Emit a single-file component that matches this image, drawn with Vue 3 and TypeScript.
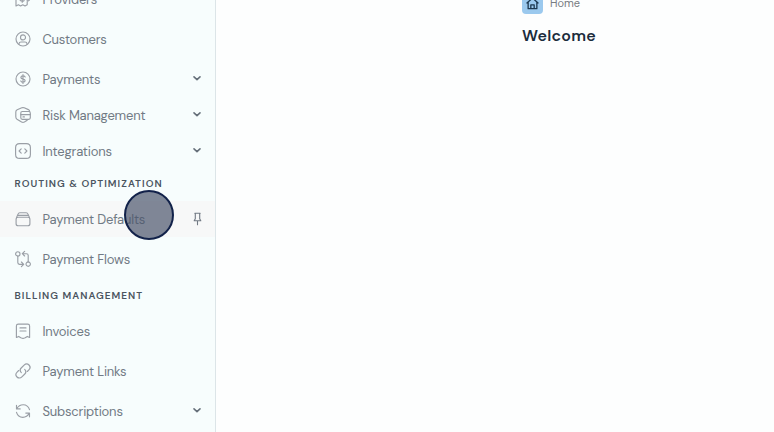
<script setup lang="ts">
interface Entry {
  kind: 'leaf' | 'group' | 'heading'
  label: string
  icon?: string
  active?: boolean
}

const entries: Entry[] = [
  { kind: 'leaf', label: 'Providers', icon: 'providers' },
  { kind: 'leaf', label: 'Customers', icon: 'customers' },
  { kind: 'group', label: 'Payments', icon: 'payments' },
  { kind: 'group', label: 'Risk Management', icon: 'risk' },
  { kind: 'group', label: 'Integrations', icon: 'integrations' },
  { kind: 'heading', label: 'ROUTING & OPTIMIZATION' },
  { kind: 'leaf', label: 'Payment Defaults', icon: 'defaults', active: true },
  { kind: 'leaf', label: 'Payment Flows', icon: 'flows' },
  { kind: 'heading', label: 'BILLING MANAGEMENT' },
  { kind: 'leaf', label: 'Invoices', icon: 'invoices' },
  { kind: 'leaf', label: 'Payment Links', icon: 'links' },
  { kind: 'group', label: 'Subscriptions', icon: 'subscriptions' },
]

const icons: Record<string, string[]> = {
  providers: [
    'M9.5 1.5H3Q1 1.5 1 3V15L3.4 13.8L5.6 15L7.8 13.8L10 15L12.2 13.8V10.5',
    'M9.3 5.2Q7.3 4 6.1 5.2Q5.3 7 7.5 7.5Q9.8 8 8.9 9.7Q7.4 10.9 5.2 9.6M7.2 3.8V11.3',
    'M13 8.2V10.2M12 9.2H14.4',
  ],
  customers: [
    'M15 8A7 7 0 1 1 1 8A7 7 0 1 1 15 8Z',
    'M10.5 6.4A2.5 2.5 0 1 1 5.5 6.4A2.5 2.5 0 1 1 10.5 6.4Z',
    'M4 13.2V12.6Q4.2 11 6 11H10Q11.8 11 12 12.6V13.2',
  ],
  payments: [
    'M15 8A7 7 0 1 1 1 8A7 7 0 1 1 15 8Z',
    'M10.2 6Q9.5 4.9 8 4.9Q6 4.9 5.9 6.4Q5.9 7.6 8 8Q10.2 8.4 10.1 9.8Q9.9 11.1 8 11.1Q6.4 11.1 5.8 9.9M8 3.6V12.4',
  ],
  risk: [
    'M14.6 4.4Q14.6 3.2 13.4 2.6L9.2 .8Q8 .3 6.8 .8L2.2 2.7Q.8 3.3 .8 5V9.8Q.8 11.4 2 12.2L6.6 15Q8 15.8 9.4 15L12.2 13.2',
    'M7.3 4.5H13.8Q15.3 4.5 15.3 6V10.8Q15.3 12.3 13.8 12.3H7.3Q5.8 12.3 5.8 10.8V6Q5.8 4.5 7.3 4.5Z',
    'M5.8 7.6H15.3M8 9.9H9.4',
  ],
  integrations: [
    'M4.6 .6H11.4Q15.4 .6 15.4 4.6V11.4Q15.4 15.4 11.4 15.4H4.6Q.6 15.4 .6 11.4V4.6Q.6 .6 4.6 .6Z',
    'M6.2 5.9L4.1 8L6.2 10.1M9.8 5.9L11.9 8L9.8 10.1',
  ],
  defaults: [
    'M3.2 6.2H12.8Q14.9 6.2 14.9 8.2V12.7Q14.9 14.7 12.8 14.7H3.2Q1.1 14.7 1.1 12.7V8.2Q1.1 6.2 3.2 6.2Z',
    'M1.5 6.8L3.1 2.9Q3.5 1.7 4.8 1.7H11.2Q12.5 1.7 12.9 2.9L14.5 6.8M2.6 4.4H13.4',
  ],
  flows: [
    'M5 2.9A2.2 2.2 0 1 1 .6 2.9A2.2 2.2 0 1 1 5 2.9Z',
    'M15.4 13.1A2.2 2.2 0 1 1 11 13.1A2.2 2.2 0 1 1 15.4 13.1Z',
    'M2.8 5.1V11.6Q2.8 13.3 4.5 13.3H8.5M6.4 11L8.7 13.3L6.4 15.6',
    'M13.2 10.9V4.4Q13.2 2.7 11.5 2.7H7.5M9.6 .4L7.3 2.7L9.6 5',
  ],
  invoices: [
    'M1.4 3Q1.4 1.1 3.3 1.1H12.7Q14.6 1.1 14.6 3V14.5L12.3 13.4L10.2 14.7L8 15.5L5.8 14.7L3.7 13.4L1.4 14.5Z',
    'M5 4.9H11M5 8H11',
  ],
  links: [
    'M6.3 9.7C4.8 8.2 5 6.2 6.2 5L9.1 2.1C10.6 .6 12.7 .7 14 2C15.3 3.3 15.4 5.4 13.9 6.9L12.3 8.5',
    'M9.7 6.3C11.2 7.8 11 9.8 9.8 11L6.9 13.9C5.4 15.4 3.3 15.3 2 14C.7 12.7 .6 10.6 2.1 9.1L3.7 7.5',
  ],
  subscriptions: [
    'M1.5 2.2V5.9H5.2M1.7 5.7Q4 1.7 8.2 1.7Q13 1.8 14.5 6.6',
    'M14.5 13.8V10.1H10.8M14.3 10.3Q12 14.3 7.8 14.3Q3 14.2 1.5 9.4',
  ],
}
</script>

<template>
  <div class="page">
    <aside class="sidebar">
      <nav class="nav">
        <div v-for="entry in entries" :key="entry.label" :class="[entry.kind, { active: entry.active }]">
          <svg v-if="entry.icon" class="icon" viewBox="0 0 16 16">
            <path v-for="d in icons[entry.icon]" :key="d" :d="d" />
          </svg>
          <span class="label">{{ entry.label }}</span>
          <svg v-if="entry.kind === 'group'" class="chevron" viewBox="0 0 10 10">
            <path d="M2 2.9L5 5.7L8 2.9" />
          </svg>
          <svg v-if="entry.active" class="pin" viewBox="0 0 10 14">
            <path d="M2.8 1.2H8.2M3.3 1.2V6.8L2.2 8.8H8.8L7.7 6.8V1.2M5.5 8.8V12.8" />
          </svg>
        </div>
      </nav>
    </aside>
    <main class="content">
      <div class="crumb">
        <span class="home">
          <svg viewBox="0 0 14 14">
            <path d="M1 6.4L7 1.2L13 6.4M2.3 5.4V12.6H11.7V5.4M5.2 12.6V8.4H8.8V12.6" />
          </svg>
        </span>
        <span class="crumb-text">Home</span>
      </div>
      <h1 class="title">Welcome</h1>
    </main>
    <div class="pointer"></div>
  </div>
</template>

<style>
body {
  margin: 0;
  overflow: hidden;
}
</style>

<style scoped>
.page {
  position: relative;
  display: flex;
  width: 774px;
  height: 432px;
  overflow: hidden;
  background: #fdfefe;
  font-family: 'DM Sans', Inter, 'Liberation Sans', sans-serif;
}
.sidebar {
  box-sizing: border-box;
  width: 216px;
  flex: none;
  border-right: 1px solid #dce5e8;
  background: #f7fdfd;
}
.nav {
  margin-top: -19px;
}
.leaf,
.group {
  display: flex;
  align-items: center;
  box-sizing: border-box;
  height: 36px;
  padding: 0 13px 0 15px;
  color: #717a84;
  font-size: 13px;
  letter-spacing: -0.2px;
}
.leaf {
  margin-bottom: 4px;
}
.heading {
  height: 28px;
  margin-bottom: 4px;
  padding-left: 14.5px;
  color: #4a545f;
  font-size: 10px;
  font-weight: 600;
  line-height: 29px;
  letter-spacing: 1.02px;
}
.active {
  background: #f7f8f8;
}
.label {
  flex: 1;
  white-space: nowrap;
}
.heading .label {
  display: block;
}
.icon {
  width: 16px;
  height: 16px;
  margin-right: 11.5px;
  flex: none;
  overflow: visible;
  stroke: #9a9fa6;
  stroke-width: 1.15;
}
svg {
  display: block;
  fill: none;
  stroke-linecap: round;
  stroke-linejoin: round;
}
.chevron {
  width: 10px;
  height: 10px;
  stroke: #66707a;
  stroke-width: 1.6;
}
.pin {
  width: 10px;
  height: 14px;
  stroke: #727a84;
  stroke-width: 1.1;
}
.content {
  flex: 1;
  padding-left: 306px;
}
.crumb {
  display: flex;
  align-items: center;
  height: 22px;
  margin-top: -8px;
}
.home {
  display: grid;
  place-items: center;
  width: 21px;
  height: 22px;
  border-radius: 4px;
  background: #9bc9ee;
}
.home svg {
  width: 13px;
  height: 13px;
  margin-top: 1px;
  stroke: #1c3850;
  stroke-width: 1.4;
}
.crumb-text {
  margin-left: 7px;
  color: #777c82;
  font-size: 11px;
}
.title {
  margin: 12px 0 0;
  color: #1b2c3c;
  font-size: 16px;
  font-weight: 600;
  line-height: 20px;
  letter-spacing: 0.25px;
}
.pointer {
  position: absolute;
  left: 124px;
  top: 190px;
  box-sizing: border-box;
  width: 50px;
  height: 50px;
  border: 2px solid #12224a;
  border-radius: 50%;
  background: rgba(76, 86, 108, 0.7);
}
</style>
